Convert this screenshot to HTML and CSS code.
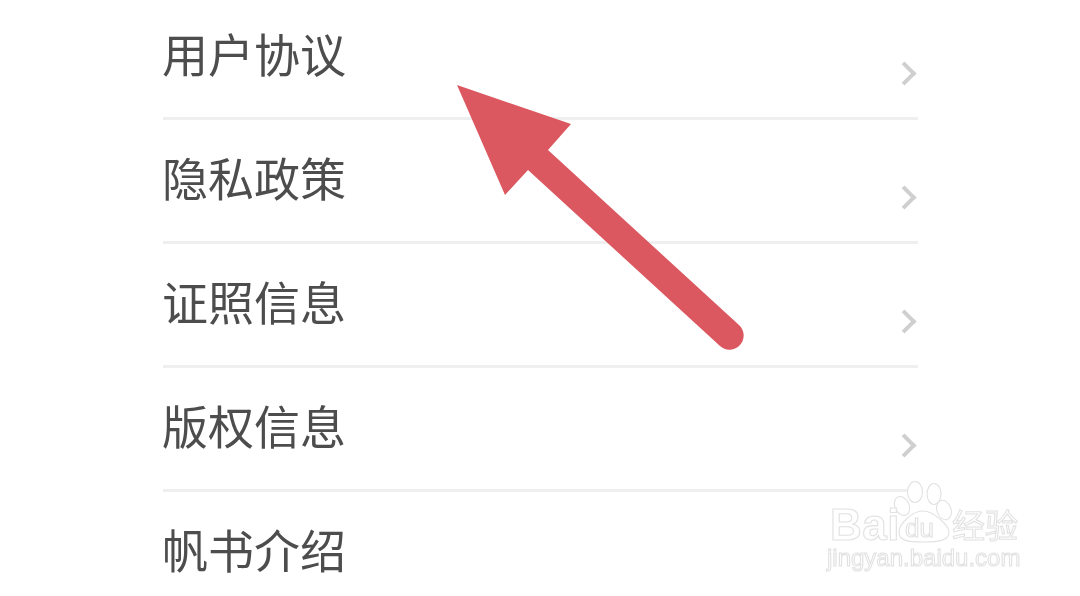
FILE: index.html
```html
<!doctype html>
<html>

<head>
  <meta charset="utf-8">
  <title>关于</title>
  <link rel="stylesheet" href="styles.css">
</head>

<body>
  <ul class="menu">
    <li class="row"><span>用户协议</span><i class="chevron"></i></li>
    <li class="row"><span>隐私政策</span><i class="chevron"></i></li>
    <li class="row"><span>证照信息</span><i class="chevron"></i></li>
    <li class="row"><span>版权信息</span><i class="chevron"></i></li>
    <li class="row"><span>帆书介绍</span></li>
  </ul>

  <!-- red arrow drawn over the list -->
  <svg class="arrow" width="1080" height="596" viewBox="0 0 1080 596">
    <path d="M457 85 L571 124 L548 150 L739 325 A14 14 0 0 1 720 346 L528 170 L505 195 Z" fill="#dc5860" />
  </svg>

  <!-- watermark -->
  <svg class="mark" width="210" height="110" viewBox="820 475 210 110">
    <g fill="#fff" stroke="#e2e2e2" stroke-width="1.1">
      <ellipse cx="915" cy="492" rx="7.5" ry="10.5" />
      <ellipse cx="934" cy="494" rx="7" ry="10.5" />
      <ellipse cx="902" cy="506" rx="7" ry="10" transform="rotate(-25 902 506)" />
      <ellipse cx="944" cy="510" rx="7" ry="10" transform="rotate(-20 944 510)" />
      <path d="M923 511 C934 511 949 526 949 532 C949 541 938 542 923 542 C908 542 899 541 899 532 C899 524 912 511 923 511 Z" />
      <text class="mark-du" x="905" y="537">du</text>
      <text class="mark-baidu" x="830" y="540">Bai</text>
      <text class="mark-cn" x="952" y="538">经验</text>
      <text class="mark-url" x="827" y="566">jingyan.baidu.com</text>
    </g>
  </svg>
</body>

</html>
```

FILE: styles.css
```css
body {
  margin: 0;
  width: 1080px;
  height: 596px;
  overflow: hidden;
  background-color: #fff;
  font-family: "Noto Sans CJK SC", "Liberation Sans", sans-serif;
}

.menu {
  list-style-type: none;
  margin: -4px 162px 0 162px;
  padding: 0 0 0 1px;
}

.row {
  display: flex;
  justify-content: space-between;
  height: 121px;
  border-bottom: 3px solid #efefef;
  color: #4d4d4d;
  font-size: 46px;
  line-height: 121px;
}

/* own layer, so the glyphs get grey antialiasing like the photo */
.row span {
  margin: -4px 0 0 -1px;
  will-change: transform;
}

.chevron {
  width: 17px;
  height: 17px;
  margin: 69px 5px 0 0;
  border-top: 4px solid #cfcfcf;
  border-right: 4px solid #cfcfcf;
  transform: rotate(45deg);
  box-sizing: border-box;
}

.arrow {
  position: absolute;
  left: 0;
  top: 0;
}

.mark {
  position: absolute;
  left: 820px;
  top: 475px;
}

.mark text {
  font-family: "Liberation Sans", "Noto Sans CJK SC", sans-serif;
}

.mark-baidu {
  font-size: 44px;
  font-weight: bold;
  letter-spacing: 0.5px;
}

.mark-du {
  font-size: 26px;
}

.mark-cn {
  font-size: 33px;
}

.mark-url {
  font-size: 24px;
}
```
